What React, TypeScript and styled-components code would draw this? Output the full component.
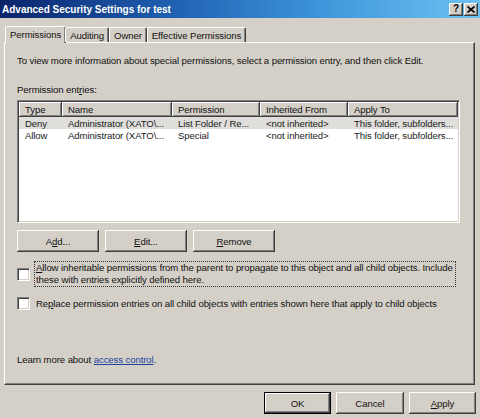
import React from "react";
import styled, { createGlobalStyle, css } from "styled-components";

const GlobalStyle = createGlobalStyle`
  html, body {
    margin: 0;
    padding: 0;
    background: #d4d0c8;
  }
  body {
    font-family: "Liberation Sans", Arial, sans-serif;
    font-size: 9.6px;
    letter-spacing: -0.1px;
    color: #111;
  }
`;

const Window = styled.div`
  width: 480px;
  height: 418px;
  background: #d4d0c8;
  display: flex;
  flex-direction: column;
  overflow: hidden;
`;

const TitleBar = styled.div`
  height: 18px;
  flex: none;
  display: flex;
  align-items: center;
  justify-content: space-between;
  padding: 0 2px 0 2px;
  background: linear-gradient(to right, #0a246a 0%, #1f5fb0 35%, #3b92d8 65%, #6cc3f2 100%);
`;

const Title = styled.span`
  color: #fff;
  font-weight: bold;
  font-size: 10px;
  letter-spacing: 0;
`;

const CaptionButtons = styled.div`
  display: flex;
  gap: 1px;
`;

const CaptionButton = styled.div`
  width: 14px;
  height: 13px;
  background: #d4d0c8;
  box-shadow: inset -1px -1px #404040, inset 1px 1px #fff, inset -2px -2px #808080;
  display: flex;
  align-items: center;
  justify-content: center;
  font-weight: bold;
  font-size: 10px;
  color: #000;
  line-height: 1;
`;

const Body = styled.div`
  flex: 1;
  display: flex;
  flex-direction: column;
  padding: 8px 5px 0 4px;
`;

const TabStrip = styled.div`
  display: flex;
  align-items: flex-end;
  height: 16px;
  padding-left: 1px;
  position: relative;
  z-index: 1;
`;

const Tab = styled.div<{ $active?: boolean }>`
  height: 14px;
  padding: 0 4px;
  display: flex;
  align-items: center;
  border-top: 1px solid #fff;
  border-left: 1px solid #fff;
  border-right: 1px solid #404040;
  box-shadow: inset -1px 0 #808080;
  border-radius: 2px 2px 0 0;
  background: #d4d0c8;
  ${(p) =>
    p.$active &&
    css`
      height: 17px;
      padding: 2px 4px 0 4px;
      margin-bottom: -1px;
      margin-right: -1px;
      align-items: flex-start;
      box-sizing: border-box;
    `}
`;

const Panel = styled.div`
  height: 343px;
  box-sizing: border-box;
  border-top: 1px solid #fff;
  border-left: 1px solid #fff;
  border-right: 1px solid #404040;
  border-bottom: 1px solid #404040;
  box-shadow: inset -1px -1px #808080;
  display: flex;
  flex-direction: column;
  padding: 11px 12px 0 12px;
`;

const Para = styled.div`
  line-height: 13px;
  white-space: nowrap;
`;

const Label = styled.div`
  margin-top: 16px;
  line-height: 13px;
`;

const Key = styled.span`
  text-decoration: underline;
`;

const ListBox = styled.div`
  margin-top: 4px;
  width: 443px;
  height: 123px;
  box-sizing: border-box;
  background: #fff;
  border-top: 1px solid #808080;
  border-left: 1px solid #808080;
  border-right: 1px solid #fff;
  border-bottom: 1px solid #fff;
  box-shadow: inset 1px 1px #404040, inset -1px -1px #d4d0c8;
  padding: 1px;
`;

const cols = "43px 110px 88px 88px 110px";

const HeaderRow = styled.div`
  display: grid;
  grid-template-columns: ${cols};
  height: 15px;
`;

const HeaderCell = styled.div`
  background: #d4d0c8;
  box-shadow: inset -1px -1px #404040, inset 1px 1px #fff, inset -2px -2px #808080;
  padding: 0 6px;
  display: flex;
  align-items: center;
  white-space: nowrap;
  overflow: hidden;
`;

const Row = styled.div<{ $selected?: boolean }>`
  display: grid;
  grid-template-columns: ${cols};
  height: 12px;
  background: ${(p) => (p.$selected ? "#dfdedb" : "#fff")};
  color: #222;
`;

const Cell = styled.div`
  padding: 0 6px;
  display: flex;
  align-items: center;
  white-space: nowrap;
  overflow: hidden;
`;

const ButtonRow = styled.div`
  display: flex;
  gap: 6px;
  margin-top: 7px;
`;

const Button = styled.div<{ $default?: boolean; $w?: number }>`
  width: ${(p) => p.$w ?? 82}px;
  height: 22px;
  box-sizing: border-box;
  background: #d4d0c8;
  display: flex;
  align-items: center;
  justify-content: center;
  box-shadow: inset -1px -1px #404040, inset 1px 1px #fff, inset -2px -2px #808080;
  ${(p) =>
    p.$default &&
    css`
      border: 1px solid #000;
    `}
`;

const CheckRow = styled.div<{ $top: number }>`
  display: flex;
  align-items: center;
  gap: 5px;
  margin-top: ${(p) => p.$top}px;
`;

const CheckBox = styled.div`
  width: 13px;
  height: 13px;
  flex: none;
  box-sizing: border-box;
  background: #fff;
  border-top: 1px solid #808080;
  border-left: 1px solid #808080;
  border-right: 1px solid #fff;
  border-bottom: 1px solid #fff;
  box-shadow: inset 1px 1px #404040, inset -1px -1px #d4d0c8;
`;

const CheckText = styled.div<{ $focus?: boolean }>`
  line-height: 12px;
  padding: 0 1px;
  white-space: nowrap;
  ${(p) =>
    p.$focus &&
    css`
      outline: 1px dotted #333;
      outline-offset: 0;
      width: 418px;
    `}
`;

const Learn = styled.div`
  margin-top: auto;
  margin-bottom: 19px;
`;

const Link = styled.span`
  color: #1c449e;
  text-decoration: underline;
`;

const Footer = styled.div`
  display: flex;
  justify-content: flex-end;
  gap: 5px;
  padding: 7px 0 0 0;
  margin-right: -1px;
`;

export default function App() {
  return (
    <>
      <GlobalStyle />
      <Window>
        <TitleBar>
          <Title>Advanced Security Settings for test</Title>
          <CaptionButtons>
            <CaptionButton>?</CaptionButton>
            <CaptionButton>
              <svg width="8" height="7" viewBox="0 0 8 7">
                <path d="M0.5 0.5 L7.5 6.5 M7.5 0.5 L0.5 6.5" stroke="#000" strokeWidth="1.6" />
              </svg>
            </CaptionButton>
          </CaptionButtons>
        </TitleBar>
        <Body>
          <TabStrip>
            <Tab $active>Permissions</Tab>
            <Tab>Auditing</Tab>
            <Tab>Owner</Tab>
            <Tab>Effective Permissions</Tab>
          </TabStrip>
          <Panel>
            <Para>
              To view more information about special permissions, select a permission entry, and then click Edit.
            </Para>
            <Label>
              Permission ent<Key>r</Key>ies:
            </Label>
            <ListBox>
              <HeaderRow>
                <HeaderCell>Type</HeaderCell>
                <HeaderCell>Name</HeaderCell>
                <HeaderCell>Permission</HeaderCell>
                <HeaderCell>Inherited From</HeaderCell>
                <HeaderCell>Apply To</HeaderCell>
              </HeaderRow>
              <Row $selected>
                <Cell>Deny</Cell>
                <Cell>Administrator (XATO\...</Cell>
                <Cell>List Folder / Re...</Cell>
                <Cell>&lt;not inherited&gt;</Cell>
                <Cell>This folder, subfolders...</Cell>
              </Row>
              <Row>
                <Cell>Allow</Cell>
                <Cell>Administrator (XATO\...</Cell>
                <Cell>Special</Cell>
                <Cell>&lt;not inherited&gt;</Cell>
                <Cell>This folder, subfolders...</Cell>
              </Row>
            </ListBox>
            <ButtonRow>
              <Button>
                A<Key>d</Key>d...
              </Button>
              <Button>
                <Key>E</Key>dit...
              </Button>
              <Button>
                <Key>R</Key>emove
              </Button>
            </ButtonRow>
            <CheckRow $top={10}>
              <CheckBox />
              <CheckText $focus>
                <Key>A</Key>llow inheritable permissions from the parent to propagate to this object and all child objects. Include
                <br />
                these with entries explicitly defined here.
              </CheckText>
            </CheckRow>
            <CheckRow $top={11}>
              <CheckBox />
              <CheckText>
                Re<Key>p</Key>lace permission entries on all child objects with entries shown here that apply to child objects
              </CheckText>
            </CheckRow>
            <Learn>
              Learn more about <Link>access control</Link>.
            </Learn>
          </Panel>
          <Footer>
            <Button $default $w={67}>OK</Button>
            <Button $w={68}>Cancel</Button>
            <Button $w={67}>
              <Key>A</Key>pply
            </Button>
          </Footer>
        </Body>
      </Window>
    </>
  );
}
